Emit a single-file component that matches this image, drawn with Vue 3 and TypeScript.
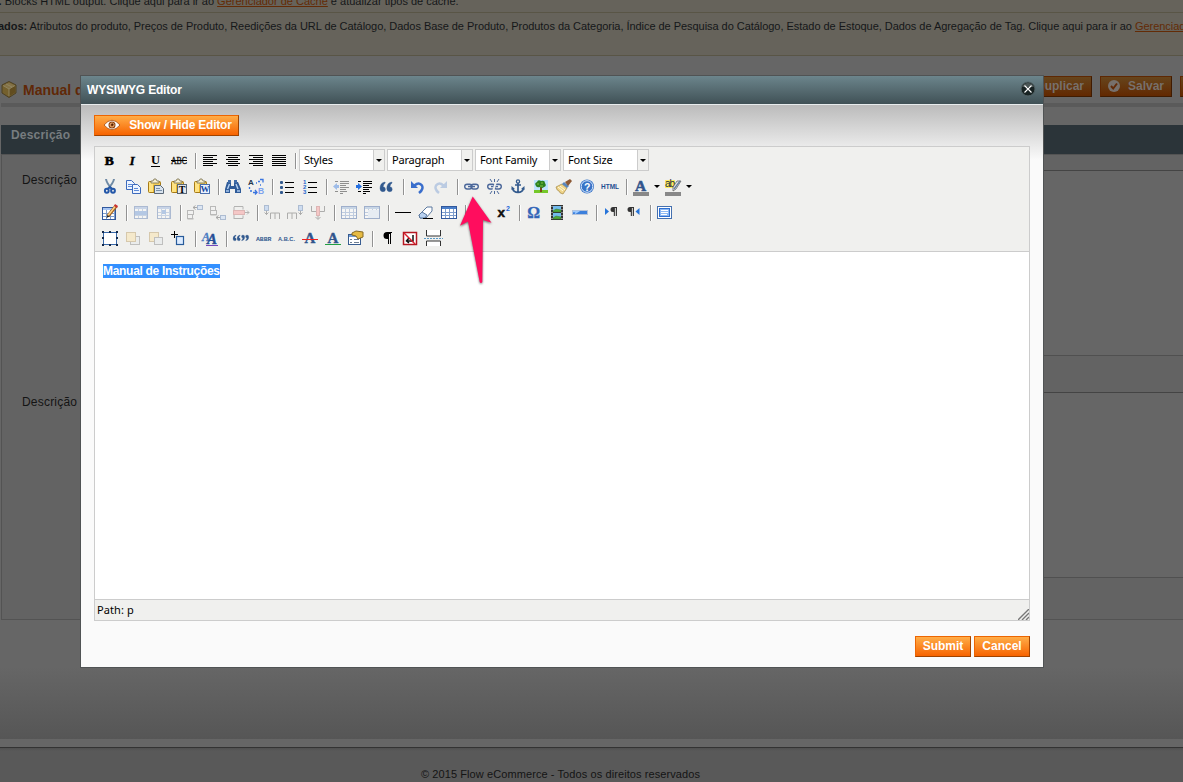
<script setup lang="ts">
type Item = { kind: 'icon' | 'sep' | 'select' | 'split'; name: string }

const r = (x: number, y: number, w: number, h: number, fill: string, extra = '') =>
  `<rect x="${x}" y="${y}" width="${w}" height="${h}" fill="${fill}" ${extra}/>`
const p = (d: string, stroke: string, w = 1, fill = 'none') =>
  `<path d="${d}" stroke="${stroke}" stroke-width="${w}" fill="${fill}"/>`
const t = (x: number, y: number, size: number, fill: string, s: string, extra = '') =>
  `<text x="${x}" y="${y}" font-size="${size}" fill="${fill}" ${extra}>${s}</text>`
const dim = (s: string, o = 0.35) => `<g opacity="${o}">${s}</g>`

const SERIF = 'font-family="Liberation Serif, serif" font-weight="bold"'
const SANS = 'font-family="Liberation Sans, sans-serif" font-weight="bold"'

const lines = (starts: number[], widths: number[]) =>
  [8, 10, 12, 14, 16, 18].map((y, i) => r(starts[i % 2], y, widths[i % 2], 1, '#000')).join('')

const grid = (x: number, y: number, w: number, h: number, head = '#4a7fca') => {
  let s = r(x + 0.5, y + 0.5, w - 1, h - 1, '#fff', 'stroke="#31589c"') + r(x + 1, y + 1, w - 2, 2, head)
  for (let gx = x + 4; gx < x + w - 1; gx += 4) s += r(gx, y + 3, 1, h - 4, '#7d9dcc')
  for (let gy = y + 6; gy < y + h - 1; gy += 3) s += r(x + 1, gy, w - 2, 1, '#7d9dcc')
  return s
}
const clipboard =
  r(4.5, 8.5, 12, 11, '#e9b72f', 'rx="1" stroke="#a67a16"') + r(5, 9, 4, 10, '#ffe382') + r(9, 10, 7, 2, '#f5cf58') +
  '<path d="M7 10V8h2l1-2h2l1 2h2v2z" fill="#f6efd0" stroke="#776c4a" stroke-width=".8"/>'
const sheet = (x: number, y: number) =>
  p(`M${x + 0.5} ${y + 0.5}h5l3 3v6h-8z`, '#3d6bbd', 1, '#edf4ff') +
  p(`M${x + 2} ${y + 4.5}h4M${x + 2} ${y + 6.5}h5`, '#5c8ad8')
const quotes = (x: number, y: number, s: number, flip = false) =>
  `<g transform="translate(${x} ${y}) scale(${s})${flip ? ' rotate(180 6 5)' : ''}"><path fill="#31598e" stroke="#31598e" stroke-width=".4" d="M5 0Q0 1 0 6.5Q0 10 3 10Q5.6 10 5.6 7.4Q5.6 5 3.2 4.8Q3.4 2.3 5.5 1zM12 0Q7 1 7 6.5Q7 10 10 10Q12.6 10 12.6 7.4Q12.6 5 10.2 4.8Q10.4 2.3 12.5 1z"/></g>`
const indent = (arrow: string, c: string) =>
  [[6, 8, 3], [11, 8, 9], [11, 10, 9], [11, 12, 6], [11, 14, 9], [11, 16, 6], [6, 18, 3], [11, 18, 7], [11, 20, 3]]
    .map(([x, y, w]) => r(x, y, w, 1, c)).join('') + arrow
const chain =
  `<rect x="4.700" y="11.200" width="7.300" height="4.800" rx="2.400" fill="none" stroke="#4c689a" stroke-width="1.400"/>` +
  `<rect x="11" y="11.200" width="7.300" height="4.800" rx="2.400" fill="none" stroke="#4c689a" stroke-width="1.400"/>` +
  p('M8 13.500h7', '#4c689a', 1.5) + p('M6 12.500h4M13 12.500h4', '#b9c9e6', 0.6)
const undo = (c: string) => p('M13 20Q18 16 16 12.500Q13 8.500 8.500 12.500', c, 2.5) + `<path d="M5 8v7h7z" fill="${c}"/>`
const pil = (x: number) =>
  `<path d="M${x + 7} 8h-4a2.500 2.500 0 0 0 0 5h.8v4h1.100v-8h.9v8h1.100z" fill="#333"/>`
const fancyA = (x: number, y: number, s: number, c = '#31548c', extra = '') => t(x, y, s, c, 'A', `${SERIF} ${extra}`)
const cellBar = (x: number, y: number, w: number) => r(x + 0.5, y + 0.5, w - 1, 4, '#f4f4f4', 'stroke="#555"')

const icons: Record<string, string> = {
  bold: t(6.8, 18, 13.5, '#000', 'B', `${SERIF} stroke="#000" stroke-width=".6"`),
  italic: t(8.5, 18, 13.5, '#000', 'I', `${SERIF} font-style="italic" stroke="#000" stroke-width=".3"`),
  underline: t(6.9, 17, 12.5, '#000', 'U', SERIF) + r(7, 19, 9, 1, '#000'),
  strike: t(4, 17, 9.5, '#111', 'ABC', 'font-family="Liberation Serif, serif" stroke="#111" stroke-width=".3" textLength="16" lengthAdjust="spacingAndGlyphs"') + r(4, 13, 16, 1, '#000'),
  left: lines([5, 5], [14, 10]),
  center: lines([5, 7], [14, 10]),
  right: lines([5, 9], [14, 10]),
  full: lines([5, 5], [14, 14]),
  cut: p('M8 6q.5 4 6 10M16 6q-.5 4-6.500 10', '#6f8aa5', 2) +
    `<ellipse cx="8.800" cy="17.800" rx="1.900" ry="2" fill="none" stroke="#2457a8" stroke-width="2"/><ellipse cx="15" cy="17.800" rx="1.900" ry="2" fill="none" stroke="#2457a8" stroke-width="2"/>` + p('M10 16l2-2 2 2', '#2457a8', 1.8),
  copy: sheet(5, 7) + sheet(11, 11),
  paste: clipboard + p('M10.500 12.500h6l3 3v5h-9z', '#596777', 1, '#d9e3ee') + p('M12 15.500h4M12 17.500h6', '#7890aa'),
  pastetext: clipboard + r(10.5, 11.5, 9, 9, '#e4e7ec', 'stroke="#596777"') + t(11.7, 19.5, 10, '#000', 'T', SERIF),
  pasteword: clipboard + r(10.5, 11.5, 9, 9, '#eaf2ff', 'stroke="#4b6fad"') + t(10.6, 19, 9, '#174a9f', 'W', SERIF),
  find: `<path d="M6 9h4v4h3V9h4l3 7v4h-6v-4h-5v4H4v-4z" fill="#2f5b98"/>` + r(7, 7, 3, 3, '#416ca8') + r(13, 7, 3, 3, '#416ca8') +
    p('M6.500 16l2-5M15 11l2 5', '#b5d0f1', 1.4) + r(5, 17, 3, 2, '#8badd8') + r(16, 17, 3, 2, '#8badd8'),
  replace: t(4, 12, 8, '#23364d', 'A', SANS) + t(14, 21, 8.5, '#7da3ee', 'B', SANS) +
    p('M12 10h1M14 8.500h2M16 6.500h3v3M16 12h1M5.500 14v2M6 18h2M9 19.500h4M11 17l2 2.500-2 2', '#3974df', 1.3),
  bullets: [8, 13, 18].map((y) => r(5, y, 3, 3, '#31598e', 'rx="1"') + r(10, y + 1, 9, 1, '#000')).join(''),
  numbers: t(5, 11, 6, '#2466cc', '1', SANS) + t(5, 16, 6, '#2466cc', '2', SANS) + t(5, 21, 6, '#2466cc', '3', SANS) +
    [9, 14, 19].map((y) => r(10, y, 9, 1, '#000')).join(''),
  outdent: dim(indent('<path d="M4 13.500l4-3.500v2h2v3h-2v2z" fill="#2670e0"/>', '#000'), 0.4),
  indent: indent('<path d="M10 13.500l-4-3.500v2h-2v3h2v2z" fill="#2670e0"/>', '#000'),
  quote: quotes(5, 9, 0.97),
  undo: undo('#3a6ecc'),
  redo: `<g opacity=".35" transform="translate(23 0) scale(-1 1)">${undo('#5a87cc')}</g>`,
  link: chain,
  unlink: chain + p('M13.500 7l-4 13', '#f0f0ee', 2) + p('M11.500 6v3M7 6l2 3M16 6l-2 3M11.500 18v3M7 21l2-3M16 21l-2-3', '#4c689a'),
  anchor: `<circle cx="12" cy="8.500" r="1.600" fill="none" stroke="#345b8e" stroke-width="1.300"/>` +
    p('M12 10v9M9 12h6M6.500 15q1 4.500 5.500 4.500T17.500 15', '#345b8e', 1.7) + '<path d="M5.500 17v-4l3.500 3zM18.500 17v-4l-3.500 3z" fill="#345b8e"/>',
  image: r(5, 7, 14, 13, '#bfe3ff') + r(5, 17, 14, 3, '#75c829') + r(11, 14, 2, 5, '#7b4a19') +
    '<path d="M7 13q-2-3 1-4q1-3 4-1q4-1 4 2q2 3-1 4q-2 2-4 0q-3 1-4-1z" fill="#2c8120"/>' + p('M8 11h2M12 10h2M11 13h3', '#81c341'),
  cleanup: '<path d="M4 14l6-3 5 4-4 6q-4-1-4-3-2 0-3-4z" fill="#efd489" stroke="#a38743" stroke-width=".7"/><path d="M10 11l2-2 5 4-2 2z" fill="#5987bd"/><path d="M13 9l5-3 2 2-4 5z" fill="#8c5935"/>' + p('M6 14l5 4M8 13l5 4', '#fffbe0'),
  help: '<circle cx="12" cy="13.500" r="7" fill="#3874c6"/><circle cx="12" cy="13.500" r="5.800" fill="none" stroke="#d9e8ff" stroke-width="1"/>' + t(9, 17.5, 10.5, '#fff', '?', SANS),
  html: t(3, 16, 6.5, '#1d4f91', 'HTML', `${SANS} textLength="18" lengthAdjust="spacingAndGlyphs"`),
  forecolor: fancyA(6, 18, 15.5, '#31548c', 'stroke="#31548c" stroke-width=".5"') + r(4, 19, 16, 4, '#888'),
  backcolor: r(4, 7, 10, 8, '#ffee62') + t(4, 14, 10, '#1b2b3c', 'ab', 'font-family="Liberation Sans, sans-serif" textLength="10"') + '<path d="M16 8l4 0-5 8-3 2 0-4z" fill="#e4e7ea" stroke="#555" stroke-width=".7"/>' + p('M19 8l-6 8', '#66809f', 1.3) + r(4, 19, 16, 4, '#888'),
  table: grid(4, 8, 14, 13, '#a7c5f3') + p('M10 17l8-10', '#a66420', 3.5) + p('M10 16.500l7.500-9.500', '#ffd68b', 1.5) + '<path d="M8.500 19l1-3 2 1.500z" fill="#222"/><path d="M17 5l3 2-1 2-3-2z" fill="#c93030"/>',
  rowprops: dim(grid(5, 7, 14, 13, '#7fa3dc') + r(6, 12, 12, 4, '#467fd3')),
  cellprops: dim(grid(5, 7, 14, 13, '#7fa3dc') + r(10, 11, 4, 4, '#467fd3')),
  rowbefore: dim(cellBar(4, 11, 7) + cellBar(4, 15, 6) + r(4.5, 19, 6, 1.5, '#555') + p('M14 8.500h-4M12.500 6.500l-2.500 2 2.500 2', '#222') + r(14.5, 6.5, 5, 4, '#b8d4ff', 'stroke="#335d9c"')),
  rowafter: dim(cellBar(4, 7, 6) + cellBar(4, 11, 7) + r(4.5, 15, 6, 1.5, '#555') + p('M14 18.500h-4M12.500 16.500l-2.500 2 2.500 2', '#222') + r(14.5, 16.5, 5, 4, '#b8d4ff', 'stroke="#335d9c"')),
  rowdel: dim(p('M5 7.500h9v3M5 19.500h9v-3M5 8v12M15 13.500h5M18 11.500l2 2-2 2', '#444') + r(4.5, 11.5, 11, 4, '#ff7d7d', 'stroke="#bc4b4b"')),
  colbefore: dim(r(4.5, 6.5, 4, 5, '#8fb8f5', 'stroke="#335d9c"') + p('M6.500 12v4M4.500 13.500l2 2 2-2M10.500 20v-6h9v6M15 14v6', '#333')),
  colafter: dim(r(15.5, 6.5, 4, 5, '#8fb8f5', 'stroke="#335d9c"') + p('M17.500 12v4M15.500 13.500l2 2 2-2M4.500 20v-6h9v6M9 14v6', '#333')),
  coldel: dim(p('M5.500 7v5.500h5M18.500 7v5.500h-5M12 15v5M9.500 18l2.500 2.500 2.500-2.500', '#333') + r(10.5, 7.5, 3, 9, '#ff7d7d', 'stroke="#bc4b4b"')),
  split: dim(grid(4, 7, 16, 13, '#92b3dd'), 0.42),
  merge: dim(grid(4, 7, 16, 13, '#92b3dd') + r(8, 11, 11, 8, '#d9e7fc'), 0.42),
  hr: r(4, 13, 16, 1, '#000'),
  eraser: '<path d="M5 16l8-8h5v4l-6 7H6z" fill="#fff" stroke="#5b789f"/><path d="M5 16l3-3 5 3-2 3H6z" fill="#b8d1f0" stroke="#5b789f"/>' + r(9, 19, 10, 1, '#000'),
  grid: grid(4, 7, 16, 13),
  sub: t(5, 16, 12, '#111', 'x', SANS) + t(13, 20, 6, '#1d55b8', '2', SANS),
  sup: t(6.5, 18, 13.5, '#111', 'x', `${SANS} stroke="#111" stroke-width=".5"`) + t(15, 12, 7, '#1d65d8', '2', SANS),
  omega: t(5.2, 18.5, 16, '#3265b8', 'Ω', `${SERIF} stroke="#3265b8" stroke-width=".3"`),
  media: r(6, 6, 12, 15, '#333') + r(8, 7, 8, 6, '#73bbed') + r(8, 14, 8, 6, '#73bbed') + p('M8 12l3-2 5 1v2H8zM8 19l3-2 5 1v2H8z', '#38752e', 0.5, '#4daa37') +
    [7, 10, 13, 16, 19].map((y) => r(6.5, y, 1, 1, '#ddd') + r(16.5, y, 1, 1, '#ddd')).join(''),
  advhr: r(4.5, 11.5, 15, 4, '#3c80dc', 'stroke="#b4c2d8"') + p('M5 12.500h5l-3 2', '#9dcaff', 1.5),
  ltr: '<path d="M6 9l4 3.500-4 3.500z" fill="#2674d9"/>' + pil(11),
  rtl: '<path d="M17.500 9l-4 3.500 4 3.500z" fill="#2674d9"/>' + pil(5),
  fullscreen: r(4.5, 7.5, 14, 12, '#fff', 'stroke="#4470af"') + r(6, 9, 11, 9, '#2e6fd1') + r(7, 10, 9, 7, '#8db9f4') + p('M8 11.500h7M8 13.500h7M8 15.500h6', '#fff'),
  layer: r(5.5, 7.5, 13, 12, '#fff', 'stroke="#3868a9"') + [[4, 6], [11, 6], [18, 6], [4, 12], [18, 12], [4, 19], [11, 19], [18, 19]].map(([x, y]) => r(x, y, 2, 2, '#13294a')).join(''),
  forward: dim(r(9.5, 11.5, 9, 8, '#e1e5eb', 'stroke="#666"') + r(5.5, 7.5, 9, 9, '#ffdd8b', 'stroke="#a88134"')),
  backward: dim(r(5.5, 7.5, 9, 9, '#ffdd8b', 'stroke="#a88134"') + r(10.5, 12.5, 8, 7, '#e1e5eb', 'stroke="#666"')),
  absolute: p('M4 9.500h7M7.500 6v7', '#000') + r(9.5, 11.5, 7, 8, '#dcebff', 'stroke="#285b9a" stroke-width="1.200"'),
  styleprops: fancyA(4, 16, 12, '#4b7bc2', 'font-style="italic" stroke="#4b7bc2" stroke-width=".3"') + fancyA(9, 18.5, 15, '#264d96', 'font-style="italic" stroke="#264d96" stroke-width=".4"') + r(8, 20, 12, 1, '#7548bd'),
  cite: quotes(4, 10, 0.58) + quotes(12.8, 10, 0.58, true),
  abbr: t(4, 16, 6, '#31598e', 'ABBR', 'font-family="Liberation Mono, monospace" font-weight="bold" textLength="15.500" lengthAdjust="spacingAndGlyphs"'),
  acronym: t(3, 16, 6, '#31598e', 'A.B.C.', `${SANS} textLength="17" lengthAdjust="spacingAndGlyphs"`),
  del: fancyA(6.5, 18, 15, '#31548c', 'stroke="#31548c" stroke-width=".4"') + r(4, 14, 16, 1, '#f02020'),
  ins: fancyA(6.5, 18, 15, '#31548c', 'stroke="#31548c" stroke-width=".4"') + r(4, 19, 16, 1, '#22a043'),
  attribs: r(4.5, 9.5, 12, 10, '#fff', 'stroke="#385d91"') + r(5, 10, 11, 2, '#739ed7') + p('M6 14.500h2M10 14.500h5M6 17.500h2M10 17.500h5', '#6e7e92') + '<path d="M8 8l4-2 7 1v5l-5 2-2-3-4-1z" fill="#e6bb43" stroke="#866923"/>',
  visualchars: '<path d="M17 7h-5a3.500 3.500 0 0 0 0 7h1v5h1V9h1v10h1V8h1z" fill="#000"/>',
  nonbreaking: r(5.5, 7.5, 13, 12, '#fff', 'stroke="#b51822" stroke-width="1.500"') + p('M15 10v6H9M11 13l-2.500 3 2.500 2', '#111', 1.5) + p('M6 8l11 11', '#dc1f2d', 1.4),
  pagebreak: p('M5.500 5v6h14V5M5.500 21v-5h14v5', '#333', 1, '#fff') + '<path d="M3 13.500h19" stroke="#5a9ac7" stroke-dasharray="2 1"/>',
}

const parse = (s: string): Item[] =>
  s.split(' ').map((name) => {
    if (name === '|') return { kind: 'sep', name }
    if (name.startsWith('=')) return { kind: 'select', name: name.slice(1).replace('_', ' ') }
    if (name.startsWith('+')) return { kind: 'split', name: name.slice(1) }
    return { kind: 'icon', name }
  })

const rows: Item[][] = [
  'bold italic underline strike | left center right full | =Styles =Paragraph =Font_Family =Font_Size',
  'cut copy paste pastetext pasteword | find replace | bullets numbers | outdent indent quote | undo redo | link unlink anchor image cleanup help html | +forecolor +backcolor',
  'table | rowprops cellprops | rowbefore rowafter rowdel | colbefore colafter coldel | split merge | hr eraser grid | sub sup | omega media advhr | ltr rtl | fullscreen',
  'layer forward backward absolute | styleprops | cite abbr acronym del ins attribs | visualchars nonbreaking pagebreak',
].map(parse)
</script>

<template>
  <div class="page">
    <div class="notices">
      <p class="notice first"><b>e.</b> Blocks HTML output. Clique aqui para ir ao <a>Gerenciador de Cache</a> e atualizar tipos de cache.</p>
      <p class="notice second"><b>ados:</b> Atributos do produto, Preços de Produto, Reedições da URL de Catálogo, Dados Base de Produto, Produtos da Categoria, Índice de Pesquisa do Catálogo, Estado de Estoque, Dados de Agregação de Tag. Clique aqui para ir ao <a>Gerenciador</a></p>
    </div>

    <div class="heading">
      <svg class="box" viewBox="0 0 16 17" width="16" height="17">
        <path d="M8 .5l7 3.500v8l-7 4.500-7-4.500V4z" fill="#74602e" stroke="#4d4023" />
        <path d="M8 1.500l6 3-6 3.500L2 4.500z" fill="#837247" />
        <path d="M8 8l6-3.500v7L8 15.500z" fill="#614c1f" />
        <path d="M5 3l6 3M8 8l6-3.500M8 8v7M2 4.500l6 3.500" stroke="#8f8460" fill="none" />
      </svg>
      <h1>Manual de Instruções</h1>
      <div class="actions">
        <span class="btn dark dup">Duplicar</span>
        <span class="btn dark save">
          <svg viewBox="0 0 12 12" width="12" height="12"><circle cx="6" cy="6" r="6" fill="#77706c" /><path d="M3 6l2.200 2.500L9 3.500" fill="none" stroke="#622a08" stroke-width="2" /></svg>
          Salvar
        </span>
        <span class="btn dark more"></span>
      </div>
    </div>

    <div class="tab">Descrição</div>
    <div class="panel">
      <div class="field short"><label>Descrição</label><div class="area"></div></div>
      <div class="field long"><label>Descrição</label><div class="area"></div></div>
    </div>
    <div class="fade"></div>
    <div class="footer">© 2015 Flow eCommerce - Todos os direitos reservados</div>

    <div class="dialog">
      <div class="titlebar">
        <span>WYSIWYG Editor</span>
        <svg class="close" viewBox="0 0 16 16" width="16" height="16">
          <circle cx="8" cy="8" r="7" fill="#182323" stroke="#536366" />
          <path d="M2 6a6.500 6.500 0 0 1 12 0" fill="#4a5555" />
          <path d="M4.500 4.500l7 7M11.500 4.500l-7 7" stroke="#fff" stroke-width="1.100" />
        </svg>
      </div>
      <div class="body">
        <span class="btn toggle">
          <svg viewBox="0 0 18 12" width="18" height="12">
            <path d="M1 6Q9-3.500 17 6Q9 15.500 1 6z" fill="#fff" stroke="#a34808" stroke-width=".8" />
            <circle cx="9" cy="6" r="3.500" fill="#8b4212" /><circle cx="9" cy="6" r="2" fill="none" stroke="#f7ba7e" /><circle cx="9.500" cy="5.500" r="1" fill="#4b1d03" />
          </svg>
          Show / Hide Editor
        </span>
        <div class="editor">
          <div class="toolbar">
            <div v-for="(row, i) in rows" :key="i" class="row">
              <template v-for="(item, j) in row" :key="j">
                <i v-if="item.kind === 'sep'" class="sep"></i>
                <div v-else-if="item.kind === 'select'" class="select"><span>{{ item.name }}</span><b></b></div>
                <div v-else-if="item.kind === 'split'" class="split">
                  <svg viewBox="0 0 23 26" width="23" height="26" v-html="icons[item.name]"></svg><u></u>
                </div>
                <svg v-else viewBox="0 0 23 26" width="23" height="26" v-html="icons[item.name]"></svg>
              </template>
            </div>
          </div>
          <div class="content"><span>Manual de Instruções</span></div>
          <div class="status">
            <span>Path: p</span>
            <svg viewBox="0 0 11 11" width="11" height="11"><path d="M0 11L11 0M4 11l7-7M8 11l3-3" stroke="#777" stroke-width="1.400" /></svg>
          </div>
        </div>
        <div class="buttons"><span class="btn">Submit</span><span class="btn">Cancel</span></div>
      </div>
    </div>

    <svg class="pointer" viewBox="0 0 40 96" width="40" height="96">
      <path d="M16.700 4.500L35.500 30.800 27 28 26.300 90q-1.300 2-2.600 0L12 29.500 4 33.700z" fill="#ff0d5e" />
    </svg>
  </div>
</template>

<style>
body { margin: 0; background: #666; }
</style>

<style scoped>
* { box-sizing: border-box; }
.page { position: relative; width: 1183px; height: 782px; overflow: hidden; background: #666; font: 12px "Liberation Sans", Arial, sans-serif; color: #141414; display: flex; flex-direction: column; }
.notices { height: 56px; flex: none; background: #66635b; border-bottom: 1px solid #595546; overflow: hidden; }
.notice { margin: 0; white-space: nowrap; font-size: 11px; line-height: 14px; color: #151719; }
.notice a { color: #632b06; text-decoration: underline; }
.first { height: 13px; border-bottom: 1px solid #595546; margin-left: -5px; text-indent: -2.5px; line-height: 3px; }
.second { padding-top: 6px; margin-left: -2px; letter-spacing: -.043px; }
.heading { flex: none; margin: 20px 0 0 1px; height: 31px; border-bottom: 4px solid #5a5a5a; display: flex; position: relative; }
.box { margin-top: 5px; }
h1 { margin: 5px 0 0 6px; font-size: 14px; line-height: 18px; color: #602807; white-space: nowrap; width: 57px; overflow: hidden; }
.actions { position: absolute; left: 1026px; top: 0; display: flex; gap: 8px; }
.btn { display: inline-flex; align-items: center; justify-content: center; height: 21px; width: 56px; border: 1px solid #ed6502; border-right-color: #a04300; border-bottom-color: #a04300; background: linear-gradient(#ffad48, #f76300); color: #fff; font-weight: bold; font-size: 12px; line-height: 17px; padding-bottom: 1px; white-space: nowrap; }
.dark { border-color: #5e2803 #401b00 #401b00 #5e2803; background: linear-gradient(#66451d, #622800); color: #77706c; }
.dup { width: 65px; justify-content: flex-end; padding-right: 7px; }
.save { width: 72px; gap: 8px; }
.more { width: 50px; }
.tab { flex: none; margin: 18px 0 0 1px; height: 29px; background: #2b3439; color: #777c7f; font-weight: bold; line-height: 21px; padding-left: 10px; letter-spacing: .2px; }
.panel { flex: none; margin-left: 1px; height: 466px; border: 1px solid #535353; border-right: 0; background: #636363; padding-top: 15px; }
.field { display: flex; height: 222px; }
.field label { width: 200px; padding: 3px 0 0 20px; letter-spacing: .2px; }
.area { flex: 1; height: 186px; background: #666; border-top: 1px solid #444; border-bottom: 1px solid #505050; }
.fade { flex: none; margin-top: 47px; height: 80px; background: linear-gradient(#666, #565656 72px, #666 72px); }
.footer { flex: 1; border-top: 1px solid #333; background: linear-gradient(#505050, #595959 3px); padding: 20px 62px 0 0; text-align: center; font-size: 11px; line-height: 13px; white-space: nowrap; letter-spacing: .09px; }

.dialog { position: absolute; left: 80px; top: 75px; width: 964px; height: 593px; border: 1px solid #505354; background: #fafafa; display: flex; flex-direction: column; }
.titlebar { flex: none; height: 28px; background: linear-gradient(#6c858c, #405156); color: #fff; font-weight: bold; display: flex; justify-content: space-between; padding: 0 7px 0 6px; line-height: 28px; letter-spacing: -.19px; }
.close { margin-top: 5px; }
.body { flex: 1; border-top: 1px solid #e8eced; padding: 10px 13px 0; background: linear-gradient(#bbb, #fafafa 55px); display: flex; flex-direction: column; }
.toggle { width: 145px; gap: 8px; letter-spacing: -.2px; padding-left: 2px; }
.editor { margin-top: 10px; height: 475px; border: 1px solid #ccc; display: flex; flex-direction: column; background: #fff; }
.toolbar { height: 105px; background: #f0f0ee; border-bottom: 1px solid #ccc; }
.row { display: flex; height: 26px; padding-left: 3px; }
.row svg { display: block; flex: none; }
.sep { width: 8px; height: 16px; margin-top: 6px; flex: none; background: linear-gradient(90deg, transparent 5px, #929292 5px, #929292 6px, #fff 6px, #fff 7px, transparent 7px); }
.select { width: 86px; height: 22px; margin: 2px 1px 0; border: 1px solid #ccc; background: #fff; display: flex; font: 11px/20px "Noto Sans", sans-serif; color: #000; }
.select span { flex: 1; padding-left: 4px; letter-spacing: -.2px; white-space: nowrap; }
.select b { width: 11px; border-left: 1px solid #ccc; background: #f0f0ee; display: flex; align-items: center; justify-content: center; }
.select b::after, .split u::after { content: ""; border: 3px solid transparent; border-top-color: #000; border-bottom: 0; }
.split { display: flex; width: 32px; }
.split u { width: 9px; padding-top: 12px; padding-left: 2px; display: flex; align-items: flex-start; text-decoration: none; }
.content { flex: 1; padding: 12px 8px; line-height: 14px; font-weight: bold; letter-spacing: -.3px; }
.content span { background: #3390ff; color: #fff; display: inline-block; height: 14px; }
.status { height: 21px; border-top: 1px solid #ccc; background: #f0f0ee; display: flex; justify-content: space-between; align-items: flex-end; font: 11px/20px "Noto Sans", sans-serif; color: #000; }
.status span { padding-left: 2px; letter-spacing: .1px; }
.buttons { display: flex; justify-content: flex-end; gap: 3px; margin-top: 15px; }
.pointer { position: absolute; left: 456px; top: 192px; filter: drop-shadow(0 1px 1px rgba(0, 0, 0, .55)); }
</style>
